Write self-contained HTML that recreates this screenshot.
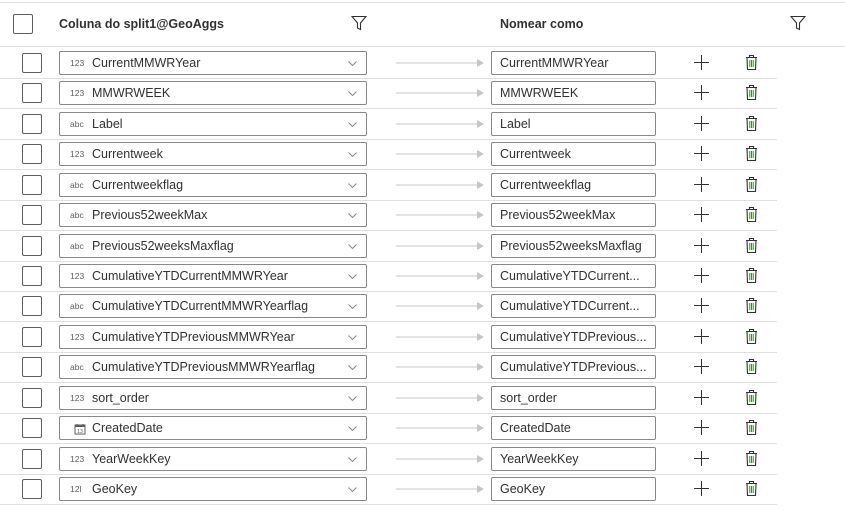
<!DOCTYPE html>
<html><head><meta charset="utf-8"><style>
*{margin:0;padding:0;box-sizing:border-box}
body{width:845px;height:511px;background:#fff;position:relative;overflow:hidden;font-family:"Liberation Sans",sans-serif;color:#323130;font-size:12.5px}
.a{position:absolute}
.hl{position:absolute;left:0;height:1px;background:#e1dfdd}
.cb{position:absolute;width:20px;height:20px;border:1px solid #605e5c;border-radius:2px;background:#fff}
.dd{position:absolute;left:59px;width:308px;height:24px;border:1px solid #8a8886;border-radius:2px}
.dd .t{position:absolute;left:10px;top:7px;font-size:8.5px;color:#605e5c;width:20px;line-height:9px}
.dd .n{position:absolute;left:32px;top:4px;white-space:nowrap}
.dd svg{position:absolute;right:9px;top:9px}
.in{position:absolute;left:491px;width:165px;height:24px;border:1px solid #8a8886;border-radius:2px;padding:4px 8px;white-space:nowrap;overflow:hidden;text-overflow:ellipsis}
.ar{position:absolute;left:396px;width:88px;height:8px}
</style></head><body>
<div class="hl" style="top:2px;width:845px"></div>
<div class="hl" style="top:46px;width:845px"></div>
<div class="cb" style="left:13px;top:14px"></div>
<div class="a" style="left:59px;top:17px;font-weight:bold;font-size:12.5px">Coluna do split1@GeoAggs</div>
<div class="a" style="left:500px;top:17px;font-weight:bold;font-size:12.5px">Nomear como</div>
<svg class="a" style="left:351px;top:15px" width="16" height="16" viewBox="0 0 16 16"><path d="M1 1.5h14L9.5 8v6.5l-3-1.5V8z" fill="none" stroke="#323130" stroke-width="1.1"/></svg>
<svg class="a" style="left:790px;top:15px" width="16" height="16" viewBox="0 0 16 16"><path d="M1 1.5h14L9.5 8v6.5l-3-1.5V8z" fill="none" stroke="#323130" stroke-width="1.1"/></svg>
<div id="rows"></div>
<script>
var d=[["123","CurrentMMWRYear","CurrentMMWRYear"],["123","MMWRWEEK","MMWRWEEK"],["abc","Label","Label"],["123","Currentweek","Currentweek"],["abc","Currentweekflag","Currentweekflag"],["abc","Previous52weekMax","Previous52weekMax"],["abc","Previous52weeksMaxflag","Previous52weeksMaxflag"],["123","CumulativeYTDCurrentMMWRYear","CumulativeYTDCurrent..."],["abc","CumulativeYTDCurrentMMWRYearflag","CumulativeYTDCurrent..."],["123","CumulativeYTDPreviousMMWRYear","CumulativeYTDPrevious..."],["abc","CumulativeYTDPreviousMMWRYearflag","CumulativeYTDPrevious..."],["123","sort_order","sort_order"],["cal","CreatedDate","CreatedDate"],["123","YearWeekKey","YearWeekKey"],["12l","GeoKey","GeoKey"]];
var h="";
for(var i=0;i<d.length;i++){var t=Math.round(51+i*30.43);
var ic=d[i][0]=="cal"?'<svg class="t" style="top:6px;left:10px" width="12" height="12" viewBox="0 0 12 12"><rect x="1" y="2" width="10" height="9" fill="none" stroke="#605e5c"/><rect x="1" y="2" width="10" height="2" fill="#605e5c"/><path d="M3 1v2M9 1v2" stroke="#605e5c"/><text x="6" y="10" font-size="5" text-anchor="middle" fill="#605e5c">13</text></svg>':'<span class="t">'+d[i][0]+'</span>';
h+='<div class="cb" style="left:22px;top:'+(t+2)+'px"></div>';
h+='<div class="dd" style="top:'+t+'px">'+ic+'<span class="n">'+d[i][1]+'</span><svg width="9" height="5" viewBox="0 0 9 5"><path d="M.5.5 4.5 4.5 8.5.5" fill="none" stroke="#8a8886"/></svg></div>';
h+='<svg class="ar" style="top:'+(t+8)+'px" viewBox="0 0 88 8"><path d="M0 4h81" stroke="#c8c6c4"/><path d="M81 0l7 4-7 4z" fill="#c8c6c4"/></svg>';
h+='<div class="in" style="top:'+t+'px">'+d[i][2]+'</div>';
h+='<svg class="a" style="left:694px;top:'+(t+4)+'px" width="15" height="15" viewBox="0 0 15 15"><path d="M7.5 0v15M0 7.5h15" stroke="#323130" stroke-width="1"/></svg>';
h+='<svg class="a" style="left:745px;top:'+(t+3)+'px" width="13" height="16" viewBox="0 0 13 16"><path d="M1 3.5h11M4.5 3.5V1.5h4v2M2 3.5l.5 12h8l.5-12" fill="none" stroke="#323130" stroke-width="1.1"/><path d="M4.8 6v7M6.5 6v7M8.2 6v7" stroke="#13a10e" stroke-width="1"/></svg>';
h+='<div class="hl" style="top:'+(t+27)+'px;width:777px"></div>';}
document.getElementById("rows").innerHTML=h;
</script>
</body></html>
